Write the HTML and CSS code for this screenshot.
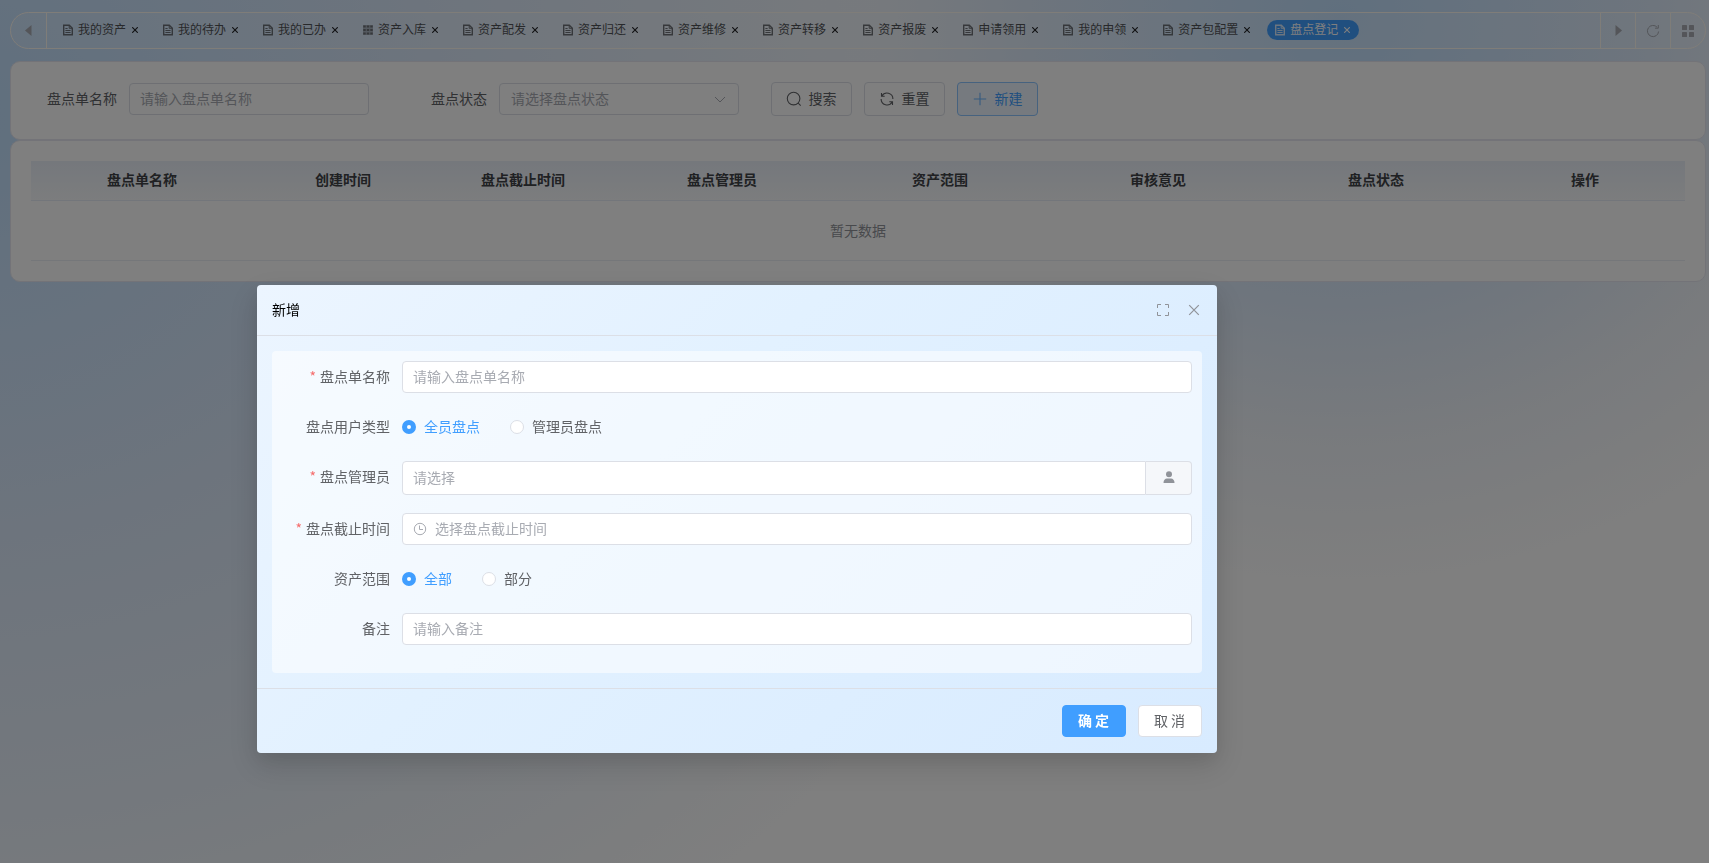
FILE: index.html
```html
<!doctype html>
<html lang="zh-CN">
<head>
  <meta charset="utf-8">
  <title>盘点登记</title>
  <link rel="stylesheet" href="styles.css">
</head>
<body>

  <svg class="sprite">
    <symbol id="i-doc" viewBox="0 0 10 12">
      <path d="M.7 1.2h5.600l3 3v6.600H.7z" fill="none" stroke="currentColor" stroke-width="1.400"/>
      <path d="M6.200 1v3.300h3.300M2.400 4.500h2.200M2.400 6.500h5.200M2.400 8.500h5.200" fill="none" stroke="currentColor"/>
    </symbol>
    <symbol id="i-table" viewBox="0 0 10 12">
      <path d="M0 1h10v10H0z" fill="currentColor" opacity=".45"/>
      <path d="M.3 1.5h2.4v2H.3zM3.8 1.5h2.4v2H3.8zM7.3 1.5h2.4v2H7.3zM.3 5h2.4v2H.3zM3.8 5h2.4v2H3.8zM7.3 5h2.4v2H7.3zM.3 8.500h2.4v2H.3zM3.8 8.500h2.4v2H3.8zM7.3 8.500h2.4v2H7.3z" fill="currentColor"/>
    </symbol>
    <symbol id="i-x" viewBox="0 0 6 6">
      <path d="M.2.2l5.6 5.6M5.8.2L.2 5.8" fill="none" stroke="currentColor" stroke-width="1.1"/>
    </symbol>
  </svg>

  <div class="tabs">
    <div class="tabs-btn first">
      <svg width="7" height="11" viewBox="0 0 7 11"><path d="M6.5 0v11L0 5.5z" fill="currentColor"/></svg>
    </div>
    <div class="tabs-list" id="tabsList"></div>
    <div class="tabs-btn">
      <svg width="7" height="11" viewBox="0 0 7 11"><path d="M.5 0v11L7 5.5z" fill="currentColor"/></svg>
    </div>
    <div class="tabs-btn">
      <svg width="14" height="14" viewBox="0 0 14 14" fill="none" stroke="currentColor"><path d="M12.6 7.5A5.6 5.6 0 1 1 11.2 3.3M12.3 1v3.2H9"/></svg>
    </div>
    <div class="tabs-btn">
      <svg width="12" height="12" viewBox="0 0 12 12" fill="currentColor"><rect width="5" height="5" rx=".6"/><rect x="7" width="5" height="5" rx=".6"/><rect y="7" width="5" height="5" rx=".6"/><rect x="7" y="7" width="5" height="5" rx=".6"/></svg>
    </div>
  </div>

  <div class="card search">
    <label class="search-label">盘点单名称</label>
    <div class="input w240">请输入盘点单名称</div>
    <label class="search-label second">盘点状态</label>
    <div class="input w240 select"><span>请选择盘点状态</span>
      <svg width="12" height="7" viewBox="0 0 12 7" fill="none" stroke="currentColor"><path d="M1 1l5 5 5-5"/></svg>
    </div>
    <div class="search-btns">
      <button class="btn">
        <svg width="16" height="16" viewBox="0 0 16 16" fill="none" stroke="currentColor" stroke-width="1.1"><circle cx="7.6" cy="7.6" r="6.3"/><path d="M12.2 12.2l2.5 2.5"/></svg><span>搜索</span>
      </button>
      <button class="btn">
        <svg width="16" height="16" viewBox="0 0 16 16" fill="none" stroke="currentColor" stroke-width="1.1"><path d="M2.500 2v3.200h3.200M2.900 5A5.900 5.900 0 0 1 13.900 8M13.500 14v-3.200h-3.200M13.100 11A5.900 5.900 0 0 1 2.100 8"/></svg><span>重置</span>
      </button>
      <button class="btn plain">
        <svg width="16" height="16" viewBox="0 0 16 16" fill="none" stroke="currentColor" stroke-width="1.1"><path d="M8 1.8v12.4M1.8 8h12.4"/></svg><span>新建</span>
      </button>
    </div>
  </div>

  <div class="card list">
    <div class="t-head">
      <div>盘点单名称</div>
      <div>创建时间</div>
      <div>盘点截止时间</div>
      <div>盘点管理员</div>
      <div>资产范围</div>
      <div>审核意见</div>
      <div>盘点状态</div>
      <div>操作</div>
    </div>
    <div class="t-empty">暂无数据</div>
  </div>

  <div class="mask">
    <div class="dialog">
      <div class="dialog-header">
        <span>新增</span>
        <div class="dialog-tools">
          <svg width="12" height="12" viewBox="0 0 12 12" fill="none" stroke="currentColor"><path d="M.5 4V.5H4M8 .5h3.5V4M11.5 8v3.5H8M4 11.5H.5V8"/></svg>
          <svg width="12" height="12" viewBox="0 0 12 12" fill="none" stroke="currentColor" stroke-width="1.2"><path d="M1.200 1.200l9.600 9.600M10.800 1.200l-9.600 9.600"/></svg>
        </div>
      </div>

      <div class="dialog-body">
        <div class="form">
          <div class="row">
            <label class="required">盘点单名称</label>
            <div class="input">请输入盘点单名称</div>
          </div>
          <div class="row">
            <label>盘点用户类型</label>
            <div class="radio checked"><span>全员盘点</span></div>
            <div class="radio"><span>管理员盘点</span></div>
          </div>
          <div class="row tall">
            <label class="required">盘点管理员</label>
            <div class="input has-append">请选择</div>
            <div class="append">
              <svg width="12" height="12" viewBox="0 0 12 12" fill="currentColor"><circle cx="6" cy="3.2" r="3"/><path d="M.5 12c0-3 1.600-4.500 3.500-4.500h4c1.900 0 3.500 1.500 3.500 4.500z"/></svg>
            </div>
          </div>
          <div class="row">
            <label class="required">盘点截止时间</label>
            <div class="input date">
              <svg width="14" height="14" viewBox="0 0 14 14" fill="none" stroke="currentColor"><circle cx="7" cy="7" r="5.700"/><path d="M6.500 3.500v4h3.500"/></svg><span>选择盘点截止时间</span>
            </div>
          </div>
          <div class="row">
            <label>资产范围</label>
            <div class="radio checked"><span>全部</span></div>
            <div class="radio"><span>部分</span></div>
          </div>
          <div class="row">
            <label>备注</label>
            <div class="input">请输入备注</div>
          </div>
        </div>
      </div>

      <div class="dialog-footer">
        <button class="btn primary"><span>确 定</span></button>
        <button class="btn"><span>取 消</span></button>
      </div>
    </div>
  </div>

  <script>
    var tabs = ['我的资产', '我的待办', '我的已办', '资产入库', '资产配发', '资产归还', '资产维修',
        '资产转移', '资产报废', '申请领用', '我的申领', '资产包配置', '盘点登记'];
    var markup = "";
    for(var i = 0; i < tabs.length; i++){
      var icon = tabs[i] == '资产入库' ? 'i-table' : 'i-doc';
      var cls = i == tabs.length - 1 ? 'tab active' : 'tab';
      markup += "<div class='" + cls + "'><svg class='tab-icon'><use href='#" + icon + "'/></svg>" +
        "<span>" + tabs[i] + "</span><svg class='tab-x'><use href='#i-x'/></svg></div>";
    }
    document.getElementById("tabsList").innerHTML = markup;
  </script>

</body>
</html>
```

FILE: styles.css
```css
*, *::before{
  box-sizing: border-box;
}
body{
  margin: 0;
  height: 863px;
  padding: 12px 3px 0 10px;
  overflow: hidden;
  font-family: "Noto Sans CJK SC", sans-serif;
  font-size: 14px;
  color: #606266;
  background-color: #fefefe;
  background-image: radial-gradient(620px 560px at 1340px 20px, #c0dffd 0%, #dceafb 50%, rgba(236,242,250,.7) 75%, rgba(254,254,254,0) 100%),
    radial-gradient(1150px 1000px at -40px 120px, #c0dffd 0%, #dbe9fb 42%, #e9f1fa 70%, rgba(254,254,254,0) 100%);
}
svg{
  display: block;
  flex: none;
}
.sprite{
  position: absolute;
  width: 0;
  height: 0;
}

/* tabs bar */
.tabs{
  display: flex;
  height: 37px;
  border: 1px solid #fffaf2;
  border-radius: 19px;
  background: rgba(255,255,255,.15);
}
.tabs-btn{
  width: 35px;
  display: flex;
  align-items: center;
  justify-content: center;
  border-left: 1px solid #fffaf2;
  color: #a8abb2;
}
.tabs-btn.first{
  width: 36px;
  border-left: none;
  border-right: 1px solid #fffaf2;
}
.tabs-list{
  flex: 1;
  display: flex;
  gap: 8px;
  padding: 7px 0 0 8px;
}
.tab{
  display: flex;
  align-items: center;
  height: 20px;
  padding: 0 9px 0 8px;
  border-radius: 10px;
  font-size: 12px;
  line-height: 18px;
  color: #505256;
}
.tab span{
  height: 20px;
}
.tab.active{
  background: #409eff;
  color: #fff;
}
.tab-icon{
  width: 10px;
  height: 12px;
  margin-right: 5px;
  opacity: .8;
}
.tab-x{
  width: 6px;
  height: 6px;
  margin-left: 6px;
  color: #202124;
}
.active .tab-x{
  color: #fff;
}

/* cards */
.card{
  border: 1px solid #e6e7f0;
  border-radius: 10px;
  background: #fff;
}
.search{
  display: flex;
  height: 79px;
  margin-top: 12px;
  padding: 21px 0 0 36px;
}
.search-label{
  width: 82px;
  line-height: 30px;
}
.search-label.second{
  width: 68px;
  margin-left: 62px;
}
.input{
  flex: 1;
  height: 32px;
  padding: 0 10px;
  border: 1px solid #dcdfe6;
  border-radius: 4px;
  background: #fff;
  line-height: 28px;
  color: #a8abb2;
}
.w240{
  flex: none;
  width: 240px;
}
.select{
  display: flex;
  align-items: center;
  justify-content: space-between;
  padding: 0 12px 0 11px;
}
.select span, .date span{
  height: 30px;
}
.search-btns{
  display: flex;
  gap: 12px;
  margin: -1px 0 0 32px;
}
.btn{
  display: flex;
  align-items: center;
  justify-content: center;
  gap: 7px;
  height: 34px;
  width: 81px;
  padding: 0 1px 0 0;
  border: 1px solid #dcdfe6;
  border-radius: 4px;
  background: #fff;
  font: 14px/20px "Noto Sans CJK SC", sans-serif;
  color: #606266;
}
.btn span{
  height: 22px;
}
.btn.plain{
  background: #ecf5ff;
  border-color: #8cc5ff;
  color: #409eff;
}
.btn.plain svg{
  opacity: .75;
}
.list{
  height: 142px;
  padding: 20px 20px 0;
}
.t-head{
  display: grid;
  grid-template-columns: 222px 180px 180px 218px 218px 218px 218px 200px;
  height: 40px;
  border-bottom: 1px solid #e6edf6;
  background: linear-gradient(#eaf0f9, #f8fafc);
  line-height: 36px;
  text-align: center;
  font-weight: bold;
  color: #404246;
}
.t-empty{
  height: 60px;
  border-bottom: 1px solid #ebeef5;
  line-height: 58px;
  text-align: center;
  color: #909399;
}

/* dialog */
.mask{
  position: fixed;
  top: 0;
  left: 0;
  right: 0;
  bottom: 0;
  padding: 285px 0 0 257px;
  background: rgba(0,0,0,.5);
}
.dialog{
  width: 960px;
  height: 468px;
  border-radius: 4px;
  background: linear-gradient(135deg, #ecf5ff 0%, #e2f1ff 40%, #d8ebff 100%);
  box-shadow: 0 12px 32px 4px rgba(0,0,0,.1), 0 8px 20px rgba(0,0,0,.08);
}
.dialog-header{
  display: flex;
  align-items: center;
  justify-content: space-between;
  height: 51px;
  padding: 0 17px 0 15px;
  border-bottom: 1px solid #dcdfe6;
  color: #000;
}
.dialog-header span{
  height: 22px;
  line-height: 20px;
}
.dialog-tools{
  display: flex;
  gap: 19px;
  color: #909399;
}
.dialog-body{
  padding: 15px;
}
.form{
  height: 322px;
  padding: 10px;
  border-radius: 4px;
  background: rgba(255,255,255,.55);
}
.row{
  display: flex;
  height: 32px;
  margin-bottom: 18px;
}
.row label{
  width: 120px;
  padding-right: 12px;
  line-height: 30px;
  text-align: right;
}
.row.tall{
  height: 34px;
}
.row.tall .input{
  height: 34px;
  line-height: 31px;
}
.required::before{
  content: "*";
  margin-right: 4px;
  color: #f56c6c;
}
.row .has-append{
  border-radius: 4px 0 0 4px;
}
.append{
  width: 46px;
  display: flex;
  align-items: center;
  justify-content: center;
  padding-bottom: 2px;
  border: 1px solid #dcdfe6;
  border-left: none;
  border-radius: 0 4px 4px 0;
  background: #f5f7fa;
  color: #909399;
}
.date{
  display: flex;
  align-items: center;
  gap: 8px;
}
.radio{
  display: flex;
  align-items: center;
  margin-right: 30px;
}
.radio span{
  height: 32px;
  line-height: 30px;
}
.radio::before{
  content: "";
  width: 14px;
  height: 14px;
  margin-right: 8px;
  border: 1px solid #dcdfe6;
  border-radius: 50%;
  background: #fff;
}
.radio.checked{
  color: #409eff;
}
.radio.checked::before{
  border: 5px solid #409eff;
}
.dialog-footer{
  display: flex;
  justify-content: flex-end;
  gap: 12px;
  padding: 16px 15px;
  border-top: 1px solid #dcdfe6;
}
.dialog-footer .btn{
  width: 64px;
  height: 32px;
}
.dialog-footer .primary{
  background: #409eff;
  border-color: #409eff;
  color: #fff;
  font-weight: bold;
}
```
